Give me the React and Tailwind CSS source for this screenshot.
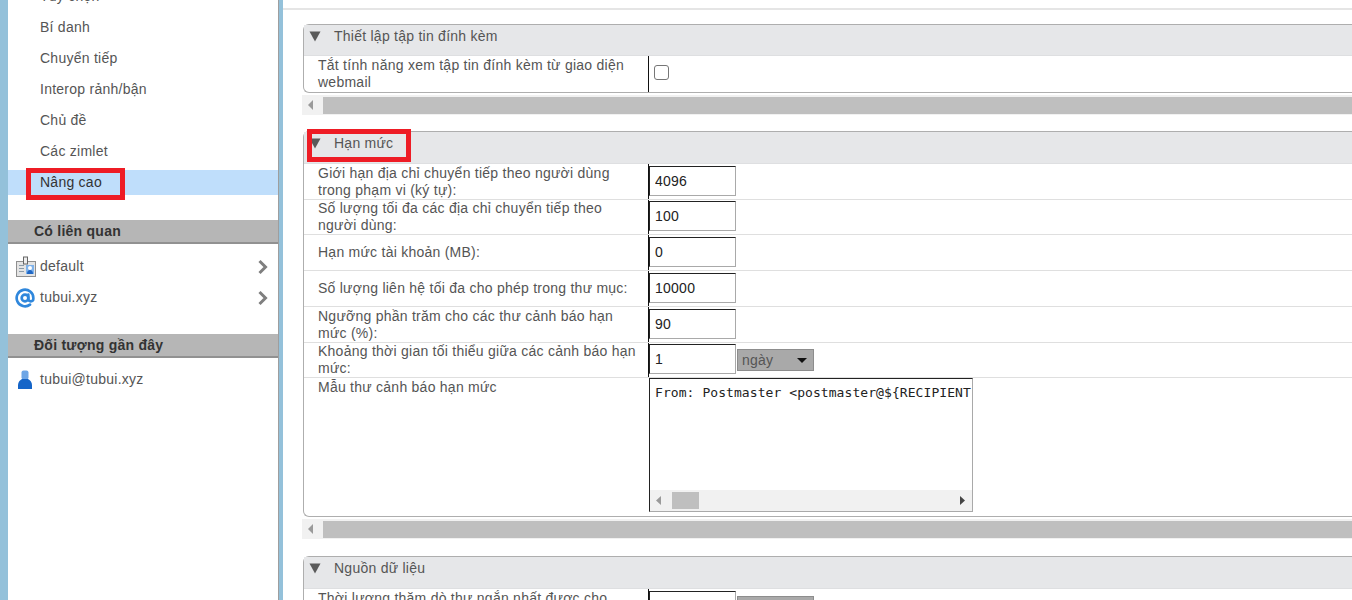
import React from "react";
import { AtSign } from "lucide-react";

const navItems = ["Tùy chọn", "Bí danh", "Chuyển tiếp", "Interop rảnh/bận", "Chủ đề", "Các zimlet"];

const quotaRows = [
    { label: ["Giới hạn địa chỉ chuyển tiếp theo người dùng", "trong phạm vi (ký tự):"], value: "4096", height: "h-[36px]" },
    { label: ["Số lượng tối đa các địa chỉ chuyển tiếp theo", "người dùng:"], value: "100", height: "h-[35px]" },
    { label: ["Hạn mức tài khoản (MB):"], value: "0", height: "h-[36px]" },
    { label: ["Số lượng liên hệ tối đa cho phép trong thư mục:"], value: "10000", height: "h-[36px]" },
    { label: ["Ngưỡng phần trăm cho các thư cảnh báo hạn", "mức (%):"], value: "90", height: "h-[36px]" },
    { label: ["Khoảng thời gian tối thiểu giữa các cảnh báo hạn", "mức:"], value: "1", height: "h-[35px]", unit: true },
];

function BadgeIcon() {
    return (
        <svg width="20" height="21" viewBox="0 0 20 21" className="shrink-0">
            <rect x="0.5" y="5.5" width="19" height="15" fill="#e4e4e4" stroke="#8f8f8f" />
            <rect x="7.5" y="1" width="4" height="7" fill="#eee" stroke="#666" />
            <rect x="3" y="9" width="5" height="1" fill="#8a9aa8" />
            <rect x="3" y="12" width="5" height="1" fill="#8a9aa8" />
            <rect x="3" y="15" width="5" height="1" fill="#8a9aa8" />
            <rect x="10" y="9" width="8" height="9" fill="#7fb2ea" />
            <circle cx="14" cy="12" r="2" fill="#fff" />
            <path d="M11 18c0-3 1.500-4 3-4s3 1 3 4z" fill="#1f66c4" />
        </svg>
    );
}

function UserIcon() {
    return (
        <svg width="16" height="20" viewBox="0 0 16 20" className="shrink-0">
            <rect x="4.500" y="0.500" width="7" height="9" rx="2" fill="#6ea6e6" />
            <path d="M1 19v-4c0-3 2-5 4-6h6c2 1 4 3 4 6v4z" fill="#1565c8" />
        </svg>
    );
}

function Chevron() {
    return (
        <svg width="12" height="16" viewBox="0 0 12 16" className="shrink-0">
            <path d="M2.500 2l6 6-6 6" fill="none" stroke="#7f7f7f" strokeWidth="3" />
        </svg>
    );
}

function SectionHeader({ title, height, children }) {
    return (
        <div className={`relative flex items-center border-b border-[#dedfe1] bg-[#e6e7e9] pb-[8px] pl-[5px] text-[#555] ${height}`}>
            <svg width="12" height="11" viewBox="0 0 12 11" className="shrink-0">
                <path d="M0.500 0.500h11L6 10.500z" fill="#5a5a5a" />
            </svg>
            <span className="ml-[13px]">{title}</span>
            {children}
        </div>
    );
}

function HScroll() {
    return (
        <div className="mt-[2px] flex h-[20px] items-center bg-[#f1f1f1] pl-[6px]">
            <svg width="6" height="10" viewBox="0 0 6 10" className="shrink-0">
                <path d="M5 0v10L0 5z" fill="#9a9a9a" />
            </svg>
            <div className="ml-[9px] h-[17px] flex-1 bg-[#bfbfbf]" />
        </div>
    );
}

function ValueInput({ value }) {
    return (
        <input
            readOnly
            defaultValue={value}
            className="mb-[2px] h-[30px] w-[87px] border border-t-[#222] border-l-[#222] border-r-[#a9a9a9] border-b-[#a9a9a9] bg-white px-[5px] text-[14px] text-[#222] outline-none"
        />
    );
}

function Row({ label, height, children }) {
    return (
        <div className={`flex items-center border-b border-[#dfdfdf] ${height}`}>
            <div className="w-[344px] shrink-0 pl-[14px] leading-[17px] text-[#555]">
                {label.map((line) => (
                    <div key={line}>{line}</div>
                ))}
            </div>
            <div className="flex h-full items-center gap-px border-l border-[#111]">{children}</div>
        </div>
    );
}

function UnitSelect({ text }) {
    return (
        <div className="flex h-[22px] w-[77px] items-center justify-between border border-[#8d8d8d] bg-[#a9a9a9] pl-[4px] pr-[6px] text-[#555]">
            <span>{text}</span>
            <svg width="10" height="5" viewBox="0 0 10 5">
                <path d="M0 0h10L5 5z" fill="#111" />
            </svg>
        </div>
    );
}

export default function App() {
    return (
        <div className="flex h-[600px] w-[1352px] overflow-hidden bg-white text-[14px] tracking-[0.25px] font-['Liberation_Sans',Arial,sans-serif]">
            <aside className="flex w-[283px] shrink-0 border-r-[4px] border-[#94c1da] border-l-[8px] bg-white">
                <div className="relative w-[271px] border-x border-[#9e9e9e] border-l-0 text-[#555]">
                    <div className="-mt-[16px] pl-[32px]">
                        {navItems.map((item) => (
                            <div key={item} className="mb-[6px] flex h-[25px] items-center">{item}</div>
                        ))}
                    </div>
                    <div className="relative flex h-[25px] items-center bg-[#bfdefb] pl-[32px] text-[#333]">
                        Nâng cao
                        <div className="absolute left-[18px] top-[-2px] h-[32px] w-[99px] border-[5px] border-[#ee1c25]" />
                    </div>

                    <div className="mt-[25px] flex h-[24px] items-center border-b-2 border-[#919191] bg-[#b6b6b6] pl-[26px] font-bold text-[#333]">Có liên quan</div>
                    <div className="mt-[7px] flex h-[31px] items-center pl-[8px] pr-[9px]">
                        <BadgeIcon />
                        <span className="ml-[4px] flex-1">default</span>
                        <Chevron />
                    </div>
                    <div className="flex h-[31px] items-center pl-[7px] pr-[9px]">
                        <AtSign size={20} strokeWidth={3.2} color="#2f87dc" className="shrink-0" />
                        <span className="ml-[5px] flex-1">tubui.xyz</span>
                        <Chevron />
                    </div>

                    <div className="mt-[21px] flex h-[24px] items-center border-b-2 border-[#919191] bg-[#b6b6b6] pl-[26px] font-bold text-[#333]">Đối tượng gần đây</div>
                    <div className="mt-[6px] flex h-[31px] items-center pl-[9px]">
                        <UserIcon />
                        <span className="ml-[7px]">tubui@tubui.xyz</span>
                    </div>
                </div>
            </aside>

            <main className="min-w-0 flex-1 overflow-hidden pt-[8px]">
                <div className="h-[2px] bg-[#e5e5e5]" />
                <div className="ml-[20px] mt-[14px] rounded-l-[6px] border border-r-0 border-[#aeaeae]">
                    <SectionHeader title="Thiết lập tập tin đính kèm" height="h-[31px]" />
                    <div className="flex h-[36px] items-center">
                        <div className="w-[344px] shrink-0 pl-[14px] leading-[17px] text-[#555]">
                            <div>Tắt tính năng xem tập tin đính kèm từ giao diện</div>
                            <div>webmail</div>
                        </div>
                        <div className="flex h-full items-center border-l border-[#111] pb-[4px] pl-[5px]">
                            <input type="checkbox" className="h-[15px] w-[15px] appearance-none rounded-[3px] border border-[#767676] bg-white" />
                        </div>
                    </div>
                </div>
                <div className="ml-[19px]"><HScroll /></div>

                <div className="ml-[20px] mt-[16px] rounded-l-[6px] border border-r-0 border-[#aeaeae]">
                    <SectionHeader title="Hạn mức" height="h-[32px]">
                        <div className="absolute left-[3px] top-[-3px] h-[33px] w-[104px] border-[5px] border-[#ee1c25]" />
                    </SectionHeader>
                    {quotaRows.map((row) => (
                        <Row key={row.value} label={row.label} height={row.height}>
                            <ValueInput value={row.value} />
                            {row.unit && <UnitSelect text="ngày" />}
                        </Row>
                    ))}
                    <div className="flex h-[138px]">
                        <div className="w-[344px] shrink-0 pl-[14px] pt-px leading-[17px] text-[#555]">Mẫu thư cảnh báo hạn mức</div>
                        <div className="ml-px flex h-[134px] w-[324px] flex-col overflow-hidden border border-t-[#222] border-l-[#222] border-r-[#a9a9a9] border-b-[#a9a9a9]">
                            <div className="flex-1 overflow-hidden whitespace-nowrap pl-[5px] pt-[6px] text-[13px] leading-[15px] tracking-[0.07px] text-[#222] font-['DejaVu_Sans_Mono',monospace]">
                                {"From: Postmaster <postmaster@${RECIPIENT"}
                            </div>
                            <div className="flex h-[21px] items-center bg-[#f1f1f1] pl-[6px] pr-[7px]">
                                <svg width="5" height="9" viewBox="0 0 5 9" className="shrink-0">
                                    <path d="M5 0v9L0 4.500z" fill="#9a9a9a" />
                                </svg>
                                <div className="ml-[11px] h-[17px] w-[27px] bg-[#bfbfbf]" />
                                <svg width="5" height="9" viewBox="0 0 5 9" className="ml-auto shrink-0">
                                    <path d="M0 0v9l5-4.500z" fill="#444" />
                                </svg>
                            </div>
                        </div>
                    </div>
                </div>
                <div className="ml-[19px]"><HScroll /></div>

                <div className="ml-[20px] mt-[17px] rounded-l-[6px] border border-r-0 border-[#aeaeae]">
                    <SectionHeader title="Nguồn dữ liệu" height="h-[32px]" />
                    <Row label={["Thời lượng thăm dò thư ngắn nhất được cho", "phép"]} height="h-[36px]">
                        <ValueInput value="" />
                        <UnitSelect text="" />
                    </Row>
                </div>
            </main>
        </div>
    );
}
